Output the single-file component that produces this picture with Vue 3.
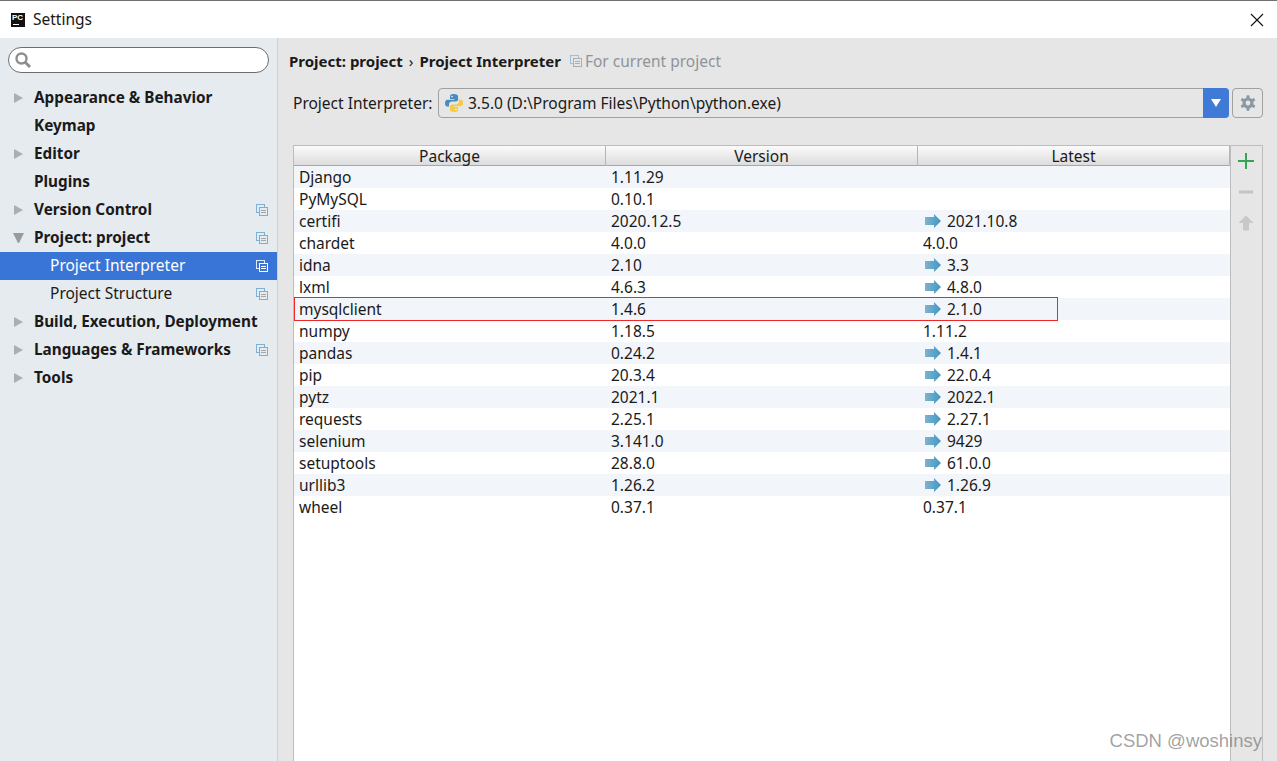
<script setup>
const side = [
  { label: 'Appearance & Behavior', arrow: 'right', bold: true },
  { label: 'Keymap', bold: true },
  { label: 'Editor', arrow: 'right', bold: true },
  { label: 'Plugins', bold: true },
  { label: 'Version Control', arrow: 'right', bold: true, copy: true },
  { label: 'Project: project', arrow: 'down', bold: true, copy: true },
  { label: 'Project Interpreter', sub: true, active: true, copy: true },
  { label: 'Project Structure', sub: true, copy: true },
  { label: 'Build, Execution, Deployment', arrow: 'right', bold: true },
  { label: 'Languages & Frameworks', arrow: 'right', bold: true, copy: true },
  { label: 'Tools', arrow: 'right', bold: true },
]
const rows = [
  ['Django', '1.11.29', '', false],
  ['PyMySQL', '0.10.1', '', false],
  ['certifi', '2020.12.5', '2021.10.8', true],
  ['chardet', '4.0.0', '4.0.0', false],
  ['idna', '2.10', '3.3', true],
  ['lxml', '4.6.3', '4.8.0', true],
  ['mysqlclient', '1.4.6', '2.1.0', true],
  ['numpy', '1.18.5', '1.11.2', false],
  ['pandas', '0.24.2', '1.4.1', true],
  ['pip', '20.3.4', '22.0.4', true],
  ['pytz', '2021.1', '2022.1', true],
  ['requests', '2.25.1', '2.27.1', true],
  ['selenium', '3.141.0', '9429', true],
  ['setuptools', '28.8.0', '61.0.0', true],
  ['urllib3', '1.26.2', '1.26.9', true],
  ['wheel', '0.37.1', '0.37.1', false],
]
</script>

<template>
  <div class="window">
    <header class="titlebar">
      <div class="logo"><span class="logo-text">PC</span><span class="logo-bar"></span></div>
      <span class="title">Settings</span>
      <svg class="close" width="14" height="14" viewBox="0 0 14 14"><path d="M1 1L13 13M13 1L1 13" stroke="#111" stroke-width="1.1" fill="none"/></svg>
    </header>
    <div class="body">
      <aside class="sidebar">
        <div class="search">
          <svg width="18" height="18" viewBox="0 0 18 18"><circle cx="7.500" cy="7.500" r="5" fill="none" stroke="#8f8f8f" stroke-width="2.400"/><path d="M11.200 11.200L16 16" stroke="#8f8f8f" stroke-width="3"/></svg>
        </div>
        <nav class="tree">
          <div v-for="item in side" :key="item.label" class="node" :class="{ active: item.active, sub: item.sub }">
            <span class="arrow" :class="item.arrow"></span>
            <span class="node-label" :class="{ bold: item.bold }">{{ item.label }}</span>
            <svg v-if="item.copy" class="copy" width="12" height="12" viewBox="0 0 12 12">
              <rect x="0.5" y="0.5" width="8" height="8" fill="none" :stroke="item.active ? '#dfe9f8' : '#7fb0d6'"/>
              <rect x="3.5" y="3.5" width="8" height="8" :fill="item.active ? '#3875d7' : '#e6ebf0'" :stroke="item.active ? '#fff' : '#9aa5ad'"/>
              <path d="M5 6.5H10M5 8.5H10" :stroke="item.active ? '#fff' : '#9aa5ad'"/>
            </svg>
          </div>
        </nav>
      </aside>
      <main class="content">
        <div class="crumbs">
          <span class="crumb">Project: project</span>
          <span class="sep">›</span>
          <span class="crumb">Project Interpreter</span>
          <span class="scope">
            <svg width="12" height="12" viewBox="0 0 12 12">
              <rect x="0.5" y="0.5" width="8" height="8" fill="none" stroke="#9cc0dc"/>
              <rect x="3.5" y="3.5" width="8" height="8" fill="#e6e6e6" stroke="#a8aeb3"/>
              <path d="M5 6.5H10M5 8.5H10" stroke="#a8aeb3"/>
            </svg>
            For current project
          </span>
        </div>
        <div class="interp">
          <label class="interp-label">Project Interpreter:</label>
          <div class="combo">
            <svg class="py" width="20" height="20" viewBox="0 0 20 20">
              <path d="M9.8 1C6.5 1 6 2.3 6 3.6V6h4.2v.8H3.6C2 6.8 1 8 1 10.2s1 3.4 2.5 3.4H5v-2.2c0-1.6 1.3-2.9 3-2.9h3.8c1.3 0 2.3-1 2.3-2.3V3.4C14.100 2 12.800 1 9.800 1z" fill="#4b8bbe"/>
              <path d="M10.200 19c3.300 0 3.800-1.300 3.800-2.600V14H9.800v-.8h6.600c1.600 0 2.600-1.200 2.600-3.400s-1-3.400-2.500-3.400H15v2.200c0 1.600-1.300 2.900-3 2.900H8.200c-1.300 0-2.300 1-2.300 2.300v2.800C5.900 18 7.200 19 10.200 19z" fill="#f7cb3f"/>
              <circle cx="8" cy="3.500" r="0.800" fill="#fff"/><circle cx="12" cy="16.500" r="0.800" fill="#fff"/>
            </svg>
            <span class="combo-text">3.5.0 (D:\Program Files\Python\python.exe)</span>
            <span class="combo-btn"><span class="combo-caret"></span></span>
          </div>
          <button class="gear-btn" type="button">
            <svg width="16" height="16" viewBox="0 0 16 16">
              <g fill="#8b99a3"><circle cx="8" cy="8" r="5.500"/>
                <rect x="6.500" y="0.300" width="3" height="15.400" rx="0.600"/>
                <rect x="6.500" y="0.300" width="3" height="15.400" rx="0.600" transform="rotate(60 8 8)"/>
                <rect x="6.500" y="0.300" width="3" height="15.400" rx="0.600" transform="rotate(120 8 8)"/></g>
              <circle cx="8" cy="8" r="2.400" fill="#e6e6e6"/>
            </svg>
          </button>
        </div>
        <section class="panel">
          <div class="table">
            <div class="thead">
              <div class="th">Package</div><div class="th">Version</div><div class="th">Latest</div>
            </div>
            <div class="tbody">
              <div v-for="(r, i) in rows" :key="r[0]" class="tr" :class="{ odd: i % 2 === 0 }">
                <div class="td">{{ r[0] }}</div>
                <div class="td">{{ r[1] }}</div>
                <div class="td latest">
                  <svg v-if="r[3]" class="up" width="16" height="14" viewBox="0 0 16 14">
                    <defs><linearGradient :id="'g' + i" x1="0" x2="1" y1="0" y2="0"><stop offset="0" stop-color="#7fb3cf"/><stop offset="1" stop-color="#3f97c4"/></linearGradient></defs>
                    <path d="M0 3H9V0L16 7L9 14V11H0Z" :fill="'url(#g' + i + ')'"/>
                  </svg>
                  {{ r[2] }}
                </div>
              </div>
              <div class="mark"></div>
            </div>
          </div>
          <div class="tools">
            <svg width="16" height="16" viewBox="0 0 16 16"><path d="M8 0V16M0 8H16" stroke="#2fa84f" stroke-width="2"/></svg>
            <svg width="16" height="16" viewBox="0 0 16 16"><path d="M1 8H15" stroke="#c4c4c4" stroke-width="3"/></svg>
            <svg width="16" height="16" viewBox="0 0 16 16"><path d="M8 0.500L15.500 8H11V15.500H5V8H0.500Z" fill="#c8c8c8"/></svg>
          </div>
        </section>
      </main>
    </div>
    <div class="watermark">CSDN @woshinsy</div>
  </div>
</template>

<style>
html, body { margin: 0; overflow: hidden; }
</style>

<style scoped>
.window {
  position: relative;
  width: 1277px;
  height: 761px;
  display: flex;
  flex-direction: column;
  overflow: hidden;
  font-family: "Noto Sans", "Open Sans", sans-serif;
  font-size: 15.5px;
  color: #1a1a1a;
  background: #e6e6e6;
}
.titlebar {
  flex: 0 0 38px;
  box-sizing: border-box;
  height: 38px;
  border-top: 1px solid #707070;
  background: #fff;
  display: flex;
  align-items: center;
  padding-left: 11px;
}
.logo {
  width: 14px; height: 14px; background: #111; position: relative; margin-right: 8px;
  overflow: hidden;
}
.logo-text { position: absolute; left: 1px; top: 0; color: #fff; font: bold 8px/9px "Liberation Sans", sans-serif; }
.logo-bar { position: absolute; left: 2px; bottom: 2px; width: 6px; height: 1px; background: #fff; }
.title { position: relative; top: -1px; }
.close { margin-left: auto; margin-right: 13px; }
.body { flex: 1; display: flex; min-height: 0; }
.sidebar {
  flex: 0 0 277px;
  width: 277px;
  box-sizing: border-box;
  background: #e6ebf0;
  box-shadow: 1px 0 0 #d0d0d0;
  padding-top: 9px;
}
.search {
  box-sizing: border-box;
  margin-left: 8px;
  width: 261px;
  height: 26px;
  border: 1px solid #6e6e6e;
  border-radius: 13px;
  background: #fff;
  display: flex;
  align-items: center;
  padding-left: 5px;
}
.tree { margin-top: 11px; }
.node {
  height: 28px;
  display: flex;
  align-items: center;
  padding-left: 14px;
  position: relative;
}
.node-label { position: relative; top: -1px; white-space: nowrap; }
.node.active { background: #3875d7; color: #fff; }
.arrow { width: 20px; height: 0; flex: none; box-sizing: border-box; }
.arrow.right { border-left: 9px solid #aeaeae; border-top: 5px solid transparent; border-bottom: 5px solid transparent; }
.arrow.down { width: 11px; margin-right: 10px; margin-left: -1px; border-top: 10px solid #9a9a9a; border-left: 5.500px solid transparent; border-right: 5.500px solid transparent; }
.node.sub .node-label { margin-left: 16px; }
.bold { font-weight: 700; font-size: 15.300px; }
.copy { position: absolute; left: 256px; top: 8px; }
.content { flex: 1; min-width: 0; padding: 0 0 0 16px; display: flex; flex-direction: column; }
.crumbs {
  height: 20px;
  margin-top: 13px;
  margin-left: -4px;
  display: flex;
  align-items: center;
  white-space: nowrap;
}
.crumb { font-weight: 700; font-size: 15px; }
.sep { margin: 0 6px; font-size: 15px; }
.scope { display: flex; align-items: center; gap: 3px; color: #8e9499; margin-left: 9px; }
.interp { display: flex; align-items: center; height: 30px; margin-top: 17px; }
.interp-label { width: 145px; flex: none; }
.combo {
  box-sizing: border-box;
  width: 791px;
  height: 30px;
  border: 1px solid #a0a0a0;
  border-radius: 4px;
  display: flex;
  align-items: center;
  padding-left: 5px;
  position: relative;
}
.py { margin-right: 4px; }
.combo-text { white-space: nowrap; }
.combo-btn {
  position: absolute; right: -1px; top: -1px; bottom: -1px; width: 26px;
  background: #3f7bd6; border-radius: 0 4px 4px 0;
  display: flex; align-items: center; justify-content: center;
}
.combo-caret { border-top: 8px solid #fff; border-left: 5px solid transparent; border-right: 5px solid transparent; }
.gear-btn {
  box-sizing: border-box; width: 31px; height: 30px; margin-left: 3px; padding: 0;
  background: transparent; border: 1px solid #a0a0a0; border-radius: 4px;
  display: flex; align-items: center; justify-content: center;
}
.panel {
  display: flex;
  margin-top: 27px;
  flex: 1;
  min-height: 0;
  box-sizing: border-box;
  width: 970px;
  border: 1px solid #bdbdbd;
  border-bottom: 0;
}
.table { flex: 0 0 936px; width: 936px; background: #fff; display: flex; flex-direction: column; border-right: 1px solid #bdbdbd; }
.thead {
  display: grid; grid-template-columns: 312px 312px 312px;
  height: 20px; box-sizing: border-box;
  background: linear-gradient(#fbfbfb, #dcdcdc);
  border-bottom: 1px solid #a8a8a8;
}
.th { text-align: center; line-height: 20px; border-right: 1px solid #b5b5b5; box-sizing: border-box; }
.tbody { position: relative; }
.tr { display: grid; grid-template-columns: 312px 312px 312px; height: 22px; line-height: 22px; }
.tr.odd { background: #f2f5f9; }
.td { padding-left: 5px; white-space: nowrap; }
.latest { display: flex; align-items: center; gap: 6px; }
.up { margin-left: 2px; }
.mark {
  position: absolute; left: 0; top: 131px; width: 764px; height: 24px;
  box-sizing: border-box; border: 1px solid #f0262a;
}
.tools { flex: 1; display: flex; flex-direction: column; align-items: center; gap: 15px; padding: 7px 1px 0 0; }
.watermark {
  position: absolute; right: 15px; top: 729px;
  font-family: "Liberation Sans", sans-serif; font-size: 18.500px; line-height: 24px;
  color: rgba(110, 110, 110, 0.65);
  white-space: nowrap;
}
</style>
